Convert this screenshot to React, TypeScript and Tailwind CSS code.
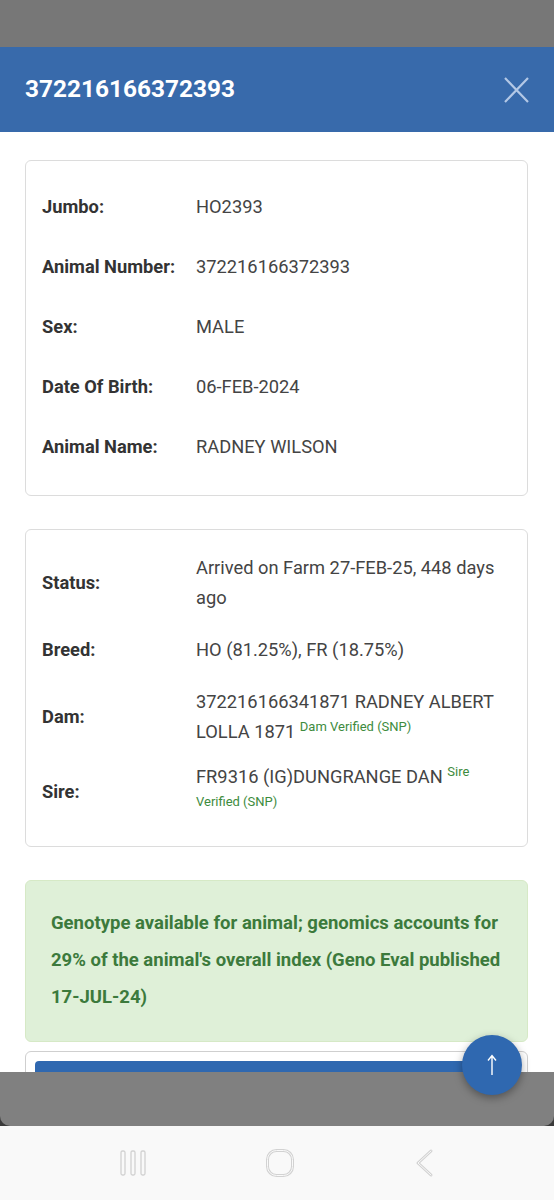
import React from 'react';

const Row: React.FC<{ label: string; children: React.ReactNode }> = ({ label, children }) => (
  <div className="flex h-[60px] items-center">
    <div className="w-[154px] shrink-0 font-bold text-[#333]">{label}</div>
    <div className="text-[#444]">{children}</div>
  </div>
);

const Verified: React.FC<{ children: React.ReactNode }> = ({ children }) => (
  <span className="align-[7px] text-[13px] leading-none text-[#3d8b3d]">{children}</span>
);

const App: React.FC = () => {
  return (
    <div className="relative h-[1200px] w-[554px] overflow-hidden bg-[#3a3a3a] font-['Roboto',sans-serif] text-[18.3px]">
      {/* Dimmed backdrop above the modal */}
      <div className="h-[47px] bg-[#777777]"></div>

      {/* Modal */}
      <div className="flex h-[1025px] flex-col overflow-hidden bg-white">
        <div className="flex h-[85px] shrink-0 items-center justify-between bg-[#386aab] pl-[25px] pr-[25px]">
          <h1 className="text-[24.4px] font-bold text-white">372216166372393</h1>
          <svg width="25" height="26" viewBox="0 0 25 26">
            <path d="M1 1 L24 25 M24 1 L1 25" stroke="#b3c8e6" strokeWidth="2.2" fill="none" />
          </svg>
        </div>

        <div className="pl-[25px] pr-[26px] pt-[28px]">
          {/* Identity card */}
          <div className="rounded-[6px] border border-[#dcdcdc] px-[16px] pt-[16px] pb-[18px]">
            <Row label="Jumbo:">HO2393</Row>
            <Row label="Animal Number:">372216166372393</Row>
            <Row label="Sex:">MALE</Row>
            <Row label="Date Of Birth:">06-FEB-2024</Row>
            <Row label="Animal Name:">RADNEY WILSON</Row>
          </div>

          {/* Status card */}
          <div className="mt-[33px] rounded-[6px] border border-[#dcdcdc] px-[16px] pt-[12px] pb-[13px] leading-[30px]">
            <div className="flex items-center py-[11px]">
              <div className="w-[154px] shrink-0 font-bold text-[#333]">Status:</div>
              <div className="text-[#444]">Arrived on Farm 27-FEB-25, 448 days ago</div>
            </div>
            <div className="flex items-center py-[11px]">
              <div className="w-[154px] shrink-0 font-bold text-[#333]">Breed:</div>
              <div className="text-[#444]">HO (81.25%), FR (18.75%)</div>
            </div>
            <div className="flex items-center py-[11px]">
              <div className="w-[154px] shrink-0 font-bold text-[#333]">Dam:</div>
              <div className="text-[#444]">
                <span>372216166341871 RADNEY ALBERT</span> <span>LOLLA 1871</span>{' '}
                <Verified>Dam Verified (SNP)</Verified>
              </div>
            </div>
            <div className="flex items-center pt-[4px] pb-[11px]">
              <div className="w-[154px] shrink-0 font-bold text-[#333]">Sire:</div>
              <div className="text-[#444]">
                FR9316 (IG)DUNGRANGE DAN <Verified>Sire</Verified> <Verified>Verified (SNP)</Verified>
              </div>
            </div>
          </div>

          {/* Genomics notice */}
          <div className="mt-[33px] rounded-[6px] border border-[#d6e9c6] bg-[#dff0d8] px-[25px] pt-[24px] pb-[25px] text-[18.5px] font-bold leading-[37px] text-[#3c7a3c]">
            Genotype available for animal; genomics accounts for 29% of the animal's overall index (Geno Eval published 17-JUL-24)
          </div>

          {/* Next card, cut off */}
          <div className="mt-[9px] rounded-[6px] border border-[#cfcfcf] p-[9px]">
            <div className="h-[40px] rounded-[4px] bg-[#2f68b0]"></div>
          </div>
        </div>
      </div>

      <div className="h-[54px] rounded-b-[10px] bg-[#808080]"></div>

      {/* Android nav bar */}
      <div className="flex h-[74px] items-center justify-around bg-[#f9f9f9] px-[60px]">
        <svg width="28" height="28" viewBox="0 0 28 28">
          <g fill="none" stroke="#d2d2d2" strokeWidth="1.3">
            <rect x="2" y="2" width="4" height="24" rx="1.5" />
            <rect x="12" y="2" width="4" height="24" rx="1.5" />
            <rect x="22" y="2" width="4" height="24" rx="1.5" />
          </g>
        </svg>
        <svg width="30" height="30" viewBox="0 0 30 30">
          <rect x="2.5" y="2.5" width="25" height="25" rx="9" fill="none" stroke="#d2d2d2" strokeWidth="3" />
          <rect x="2.5" y="2.5" width="25" height="25" rx="9" fill="none" stroke="#f9f9f9" strokeWidth="1" />
        </svg>
        <svg width="22" height="30" viewBox="0 0 22 30">
          <path d="M18 3 L5 15 L18 27" fill="none" stroke="#d2d2d2" strokeWidth="3" strokeLinejoin="round" strokeLinecap="round" />
          <path d="M18 3 L5 15 L18 27" fill="none" stroke="#f9f9f9" strokeWidth="1" strokeLinejoin="round" strokeLinecap="round" />
        </svg>
      </div>

      {/* Scroll to top button */}
      <button className="absolute left-[462px] top-[1035px] flex h-[60px] w-[60px] items-center justify-center rounded-full bg-[#2f68b0] shadow-[0_3px_8px_rgba(0,0,0,0.35)]">
        <svg width="12" height="22" viewBox="0 0 12 22">
          <path d="M6 21 V2 M2 6.5 L6 1.5 L10 6.5" fill="none" stroke="white" strokeWidth="1.4" />
        </svg>
      </button>
    </div>
  );
};

export default App;
